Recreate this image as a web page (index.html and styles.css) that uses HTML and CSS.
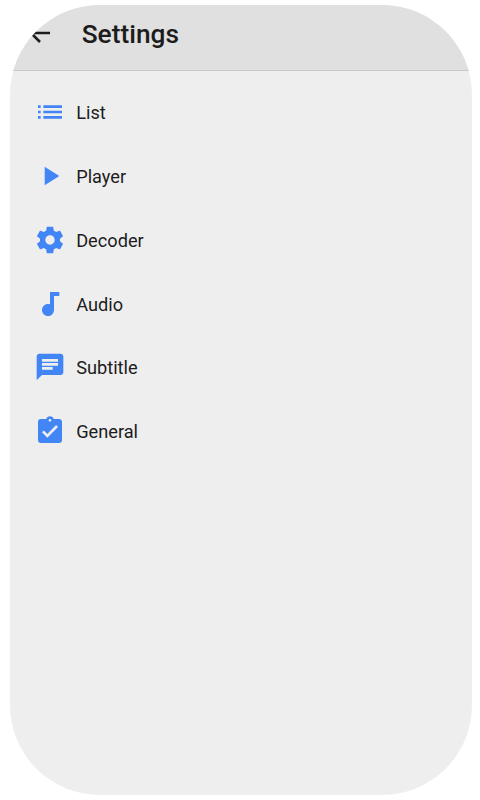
FILE: index.html
```html
<!DOCTYPE html>
<html lang="en">
<head>
<meta charset="utf-8">
<title>Settings</title>
<link rel="stylesheet" href="styles.css">
</head>
<body>
<main class="screen">
  <header class="bar">
    <svg class="back" viewBox="0 0 28 28"><path d="M23 14H4M13 23l-9-9 9-9"/></svg>
    <h1 class="title">Settings</h1>
  </header>
  <ul class="menu">
    <li class="item"><svg class="icon" viewBox="0 0 24 24"><path d="M3 13h2v-2H3v2zm0 4h2v-2H3v2zm0-8h2V7H3v2zm4 4h14v-2H7v2zm0 4h14v-2H7v2zM7 7v2h14V7H7z"/></svg><span class="label">List</span></li>
    <li class="item"><svg class="icon" viewBox="0 0 24 24"><path d="M8 5v14l11-7z"/></svg><span class="label">Player</span></li>
    <li class="item"><svg class="icon" viewBox="0 0 24 24"><path d="M19.43 12.98c.04-.32.07-.64.07-.98s-.03-.66-.07-.98l2.11-1.65c.19-.15.24-.42.12-.64l-2-3.46c-.12-.22-.39-.3-.61-.22l-2.49 1c-.52-.4-1.08-.73-1.69-.98l-.38-2.65C14.46 2.18 14.25 2 14 2h-4c-.25 0-.46.18-.49.42l-.38 2.65c-.61.25-1.17.59-1.69.98l-2.49-1c-.23-.09-.49 0-.61.22l-2 3.46c-.13.22-.07.49.12.64l2.11 1.65c-.04.32-.07.65-.07.98s.03.66.07.98l-2.11 1.65c-.19.15-.24.42-.12.64l2 3.46c.12.22.39.3.61.22l2.49-1c.52.4 1.08.73 1.69.98l.38 2.65c.03.24.24.42.49.42h4c.25 0 .46-.18.49-.42l.38-2.65c.61-.25 1.17-.59 1.69-.98l2.49 1c.23.09.49 0 .61-.22l2-3.46c.12-.22.07-.49-.12-.64l-2.11-1.65zM12 15.5c-1.93 0-3.5-1.57-3.5-3.5s1.57-3.5 3.5-3.5 3.5 1.57 3.5 3.5-1.57 3.5-3.5 3.5z"/></svg><span class="label">Decoder</span></li>
    <li class="item"><svg class="icon" viewBox="0 0 24 24"><path d="M12 3v9.28c-.47-.17-.97-.28-1.5-.28C8.01 12 6 14.01 6 16.5S8.01 21 10.5 21c2.31 0 4.2-1.75 4.45-4H15V6h4V3h-7z"/></svg><span class="label">Audio</span></li>
    <li class="item"><svg class="icon" viewBox="0 0 24 24"><path d="M20 2H4c-1.1 0-1.99.9-1.99 2L2 22l4-4h14c1.1 0 2-.9 2-2V4c0-1.1-.9-2-2-2zM6 9h12v2H6V9zm8 5H6v-2h8v2zm4-6H6V6h12v2z"/></svg><span class="label">Subtitle</span></li>
    <li class="item"><svg class="icon" viewBox="0 0 24 24"><path d="M19 3h-4.18C14.4 1.84 13.3 1 12 1c-1.3 0-2.4.84-2.82 2H5c-1.1 0-2 .9-2 2v14c0 1.1.9 2 2 2h14c1.1 0 2-.9 2-2V5c0-1.1-.9-2-2-2zm-7 0c.55 0 1 .45 1 1s-.45 1-1 1-1-.45-1-1 .45-1 1-1zm-2 14l-4-4 1.41-1.41L10 14.17l6.59-6.59L18 9l-8 8z"/></svg><span class="label">General</span></li>
  </ul>
</main>
</body>
</html>
```
FILE: styles.css
```css
* { box-sizing: border-box; }
body {
  margin: 0;
  padding: 5px 8px 5px 10px;
  background: #fff;
  color: #1c1c1c;
  font-family: Roboto, sans-serif;
}
.screen {
  height: 790px;
  border-radius: 90px;
  overflow: hidden;
  background: #eee;
}
.bar {
  display: flex;
  align-items: center;
  height: 66px;
  padding: 0 0 9px 17px;
  background: #e0e0e0;
  border-bottom: 1px solid #c9c9c9;
}
.back {
  width: 28px;
  height: 28px;
  margin-right: 26.7px;
  fill: none;
  stroke: #1c1c1c;
  stroke-width: 2.6;
}
.title {
  margin: 0;
  padding-top: 1px;
  font-size: 26.3px;
  line-height: 32px;
  font-weight: 500;
}
.menu {
  margin: 0;
  padding: 9.5px 0 0 23.6px;
  list-style: none;
}
.item {
  display: flex;
  align-items: center;
  height: 63.75px;
}
.icon {
  width: 32px;
  height: 32px;
  margin-right: 10.6px;
  fill: #4285f4;
}
.label {
  font-size: 18.2px;
  line-height: 24px;
  padding-top: 2px;
}
```
